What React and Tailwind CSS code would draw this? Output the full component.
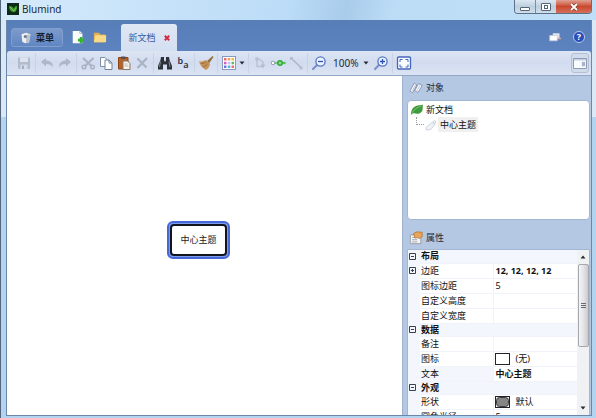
import { useState } from 'react';

const GROUPS = [
  {
    name: '布局',
    rows: [
      { label: '边距', value: '12, 12, 12, 12', bold: true, expandable: true },
      { label: '图标边距', value: '5' },
      { label: '自定义高度', value: '' },
      { label: '自定义宽度', value: '' },
    ],
  },
  {
    name: '数据',
    rows: [
      { label: '备注', value: '' },
      { label: '图标', value: '(无)', swatch: 'empty' },
      { label: '文本', value: '中心主题', bold: true, selected: true },
    ],
  },
  {
    name: '外观',
    rows: [
      { label: '形状', value: '默认', swatch: 'shape' },
      { label: '圆角半径', value: '5' },
    ],
  },
];

const Svg = ({ children, className = 'h-4 w-4' }) => (
  <svg viewBox="0 0 16 16" className={className} fill="none" aria-hidden="true">
    {children}
  </svg>
);

const SaveIcon = () => (
  <Svg>
    <path d="M2 2.500h12v11.500H3l-1-1z" fill="#b3bccb" />
    <path d="M4 2.500h8v4.500H4z" fill="#dde4f0" />
    <path d="M4.500 9.500h7V14h-7z" fill="#d3dbe8" />
    <path d="M6 10.500h2V14H6z" fill="#a3adbd" />
  </Svg>
);

const UndoIcon = () => (
  <Svg>
    <path d="M2 7l5-4v2.500c4 0 7 2 7 7-1.500-2.500-3.500-3.500-7-3.500v2.500z" fill="#adb7c8" />
  </Svg>
);

const RedoIcon = () => (
  <Svg>
    <path d="M14 7L9 3v2.500c-4 0-7 2-7 7C3.500 10 5.500 9 9 9v2.500z" fill="#adb7c8" />
  </Svg>
);

const CutIcon = () => (
  <Svg>
    <path d="M3 3l8.500 8M13.500 3L5 11" stroke="#a9b3c4" strokeWidth="2" />
    <circle cx="4" cy="12" r="1.800" stroke="#a9b3c4" strokeWidth="1.500" />
    <circle cx="12.500" cy="12" r="1.800" stroke="#a9b3c4" strokeWidth="1.500" />
  </Svg>
);

const CopyIcon = () => (
  <Svg>
    <path d="M2.500 2.500h4.500l2 2v7H2.500z" fill="#fff" stroke="#7d8fa9" />
    <path d="M7 5h4l3 3v6.500H7z" fill="#fff" stroke="#71849f" />
    <path d="M11 5v3h3" stroke="#71849f" />
  </Svg>
);

const PasteIcon = () => (
  <Svg>
    <path d="M2.500 2.500h9.500v11.500H2.500z" fill="#b5622a" stroke="#8b4318" />
    <path d="M5 1.500h4.500v2.500H5z" fill="#52514f" />
    <path d="M7 6h4.500l2.500 2.500v6H7z" fill="#f6f3ef" stroke="#8c7564" />
    <path d="M8.500 9h3M8.500 11h4" stroke="#b9b2ac" />
  </Svg>
);

const DeleteIcon = () => (
  <Svg>
    <path d="M3.500 3.500l9 9M13 3L3.500 13" stroke="#a9b3c4" strokeWidth="2.200" />
  </Svg>
);

const FindIcon = () => (
  <Svg>
    <path d="M4 2h3v3l.5 1.500h1L9 5V2h3l.5 3L15 11v3.500h-5V9.500H6v5H1V11l2.500-6z" fill="#2d3139" />
    <path d="M3.500 6.500L2.500 12M12 6.500l1 5.500" stroke="#858d99" />
  </Svg>
);

const BrushIcon = () => (
  <Svg>
    <path d="M14.500 1L9 6l2 2.500L15.500 2z" fill="#94723c" />
    <path d="M1 6.500c3 .5 5-1 7-1.500l4 4c-.5 3-2 5-4 6C5 13.500 2 10.500 1 6.500z" fill="#c4935a" />
    <path d="M3 8.500c3 0 4-1 5.500-1.500M5 11.500c2 0 3.500-1.500 4.500-2.500" stroke="#9c6c34" />
  </Svg>
);

const PaletteIcon = () => (
  <Svg>
    <rect x="1.500" y="1.500" width="13" height="13" fill="#fff" stroke="#8a98bd" />
    <path d="M3 3h2.500v2.500H3zM10.500 10.500H13V13h-2.500z" fill="#ee6b70" />
    <path d="M6.800 3h2.500v2.500H6.800z" fill="#ef9f5e" />
    <path d="M10.500 3H13v2.500h-2.500z" fill="#e4c145" />
    <path d="M3 6.800h2.500v2.500H3z" fill="#d45bc2" />
    <path d="M6.800 6.800h2.500v2.500H6.800z" fill="#bbc3ff" />
    <path d="M10.500 6.800H13v2.500h-2.500z" fill="#59bd65" />
    <path d="M3 10.500h2.500V13H3z" fill="#6674df" />
    <path d="M6.800 10.500h2.500V13H6.800z" fill="#55b2d9" />
  </Svg>
);

const TopicIcon = () => (
  <Svg>
    <path d="M5 4v7.500h5M7 4l4 3v3" stroke="#b9c3d3" strokeWidth="1.500" />
    <circle cx="5" cy="4" r="2" fill="#b9c3d3" />
    <path d="M8.500 9.500h5l-2.500 4z" fill="#b4becf" />
  </Svg>
);

const SiblingIcon = () => (
  <Svg>
    <path d="M4 8h11" stroke="#55bd55" strokeWidth="1.500" />
    <circle cx="3" cy="8" r="1.800" fill="#fff" stroke="#929daf" />
    <circle cx="10" cy="8" r="3" fill="#2eaa36" />
    <path d="M8.500 8h3M10 6.500v3" stroke="#a7efa3" />
    <circle cx="14.500" cy="8" r="1.200" fill="#4fbb50" />
  </Svg>
);

const LinkIcon = () => (
  <Svg>
    <path d="M4 4l9 8.500" stroke="#adb7c8" strokeWidth="1.500" />
    <path d="M2 2h3v3H2zM11.500 11.500h3v3h-3z" fill="#b6c0d1" />
  </Svg>
);

const ZoomIcon = ({ plus }) => (
  <Svg>
    <path d="M6.500 9.500L2 14" stroke="#7d91c7" strokeWidth="2.200" strokeLinecap="round" />
    <circle cx="9.500" cy="6.500" r="4.600" fill="#eaf2ff" stroke="#5574c4" strokeWidth="1.300" />
    <path d={plus ? 'M7 6.500h5M9.500 4v5' : 'M7 6.500h5'} stroke="#3153b4" strokeWidth="1.300" />
  </Svg>
);

const FitIcon = () => (
  <Svg>
    <rect x="1.500" y="2" width="13" height="12" rx="1" fill="#f8fbff" stroke="#4666bd" strokeWidth="1.300" />
    <path d="M4 7V4.500h2.500M9.500 4.500H12V7M12 9.500V12H9.500M6.500 12H4V9.500" stroke="#4666bd" />
  </Svg>
);

const SidebarIcon = () => (
  <Svg>
    <path d="M1.500 3.500h13v10h-13z" fill="#fafbfd" stroke="#8f9bb0" />
    <path d="M2 4h12v1.500H2z" fill="#c3cfe2" />
    <path d="M9.500 6.500h4V12h-4z" fill="#e3e9f3" />
    <path d="M10 8h3M10 10h3" stroke="#6d80a5" />
  </Svg>
);

const TagIcon = () => (
  <Svg className="h-3.5 w-3.5 shrink-0">
    <path d="M6 2.500l3 2-5 9-3-2zM11 3l4 2-4.500 8-4-2z" fill="#f7f9fd" stroke="#8292aa" />
    <path d="M7.500 4.500l-4 7M12.500 5l-4 7" stroke="#b9c3d2" />
  </Svg>
);

const NoteIcon = () => (
  <Svg className="h-3.5 w-3.5 shrink-0">
    <path d="M2 11l7-6 4 2-5 6-5 1z" fill="#eef1f5" stroke="#ccd2da" />
    <circle cx="12" cy="4.500" r="1.500" fill="#fff" stroke="#bfc7d1" />
  </Svg>
);

const LeafIcon = () => (
  <Svg className="h-3.5 w-3.5 shrink-0">
    <path d="M1 14C1 6 5 2 15 2c-1 2 0 4-1 7-2 3-5 3.500-8 3-2-.5-3.500 0-5 2z" fill="#3e9b3e" />
    <path d="M2 12c2-4 5-6 11-9" stroke="#8fcd7c" />
  </Svg>
);

const PropertyIcon = () => (
  <Svg className="h-3.5 w-3.5 shrink-0">
    <path d="M1.500 4.500h12v10h-12z" fill="#f5f4f1" stroke="#93979e" />
    <path d="M3.500 7.500h4M3.500 10h6M3.500 12.500h6" stroke="#919fb6" />
    <path d="M5 3l4-2 6 .5v5l-3 2-2-1-3 .5z" fill="#e8a458" stroke="#ba7831" />
  </Svg>
);

const Caret = ({ up }) => (
  <svg viewBox="0 0 6 4" className="h-1 w-1.5 shrink-0" aria-hidden="true">
    <path d={up ? 'M0.500 3.500h5L3 .5z' : 'M0.500 .5h5L3 3.500z'} fill="#252a33" />
  </svg>
);

const ToolButton = ({ label, disabled, children }) => (
  <button type="button" aria-label={label} disabled={disabled} className="flex h-5 w-[18px] shrink-0 items-center justify-center rounded-sm">
    {children}
  </button>
);

const Separator = () => <span className="mx-[2px] h-5 w-px shrink-0 bg-[#c8d3e6]" />;

const TitleBar = () => (
  <header className="flex h-5 shrink-0 items-start justify-between bg-linear-[100deg,#d6ebfb_0%,#c5e1f9_30%,#bcdcf7_48%,#a9cceb_58%,#bddcf6_66%,#bfdef8_100%] pl-1.5">
    <div className="flex items-center gap-[3px] pt-[3px]">
      <svg viewBox="0 0 12 12" className="h-3 w-3" aria-hidden="true">
        <rect width="12" height="12" fill="#102a18" />
        <path d="M2 3c3 0 4 1 5 3 0-2 1-3 3-3 0 4-1 6-3 6-3 0-5-2-5-6z" fill="#3c9b2f" />
        <path d="M3 4l4 4 2-3" stroke="#93d450" fill="none" strokeWidth=".7" />
      </svg>
      <h1 className="text-[10px] leading-3 text-[#1c2733]">Blumind</h1>
    </div>
    <div className="mr-1 flex h-3.5 overflow-hidden rounded-b-sm border border-t-0 border-[#5e7087]">
      <button type="button" aria-label="最小化" className="flex w-[21px] items-center justify-center border-r border-[#7b8da3] bg-linear-to-b from-[#dce8f3] via-[#bdcfdf] to-[#cfdeea]">
        <span className="mt-1 h-1 w-2.5 rounded-[1px] border border-[#566577] bg-white" />
      </button>
      <button type="button" aria-label="最大化" className="flex w-5 items-center justify-center bg-linear-to-b from-[#dce8f3] via-[#bdcfdf] to-[#cfdeea]">
        <span className="flex h-2 w-2.5 items-center justify-center rounded-[1px] border border-[#566577] bg-white">
          <span className="h-1 w-1 border border-[#566577]" />
        </span>
      </button>
      <button type="button" aria-label="关闭" className="flex w-[35px] items-center justify-center bg-linear-to-b from-[#e0a192] via-[#c9472e] to-[#d3705a]">
        <svg viewBox="0 0 10 8" className="h-2 w-2.5" aria-hidden="true">
          <path d="M2 1l6 6M8 1L2 7" stroke="#6f3830" strokeWidth="3" />
          <path d="M2 1l6 6M8 1L2 7" stroke="#fff" strokeWidth="1.800" />
        </svg>
      </button>
    </div>
  </header>
);

const TabBar = () => (
  <nav className="flex h-[31px] shrink-0 items-end bg-linear-to-b from-[#587eb8] to-[#5c83bf] pl-1">
    <button type="button" className="mb-1 flex h-[19px] w-[52px] items-center justify-center gap-1 rounded-[3px] border border-[#809fd0] bg-linear-to-b from-[#7d9acb] to-[#6186c2] text-[9px] font-bold text-[#141d2d]">
      <Svg className="h-3 w-3">
        <path d="M2 3l6-2 6 2-2 11-5 1-4-2z" fill="#eef0f2" />
        <path d="M8 4l6-1-2 11-4 1z" fill="#bcc3cc" />
        <circle cx="7" cy="6" r="2" fill="#69788b" />
      </Svg>
      菜单
    </button>
    <button type="button" aria-label="新建" className="mb-1.5 ml-2 flex h-4 w-[14px] items-center justify-center">
      <Svg className="h-3.5 w-3.5">
        <path d="M2 1h8l3 3v11H2z" fill="#fafcfc" />
        <path d="M10 1v3h3" stroke="#aebecf" />
        <path d="M11.500 8v7M8 11.500h7" stroke="#35b52d" strokeWidth="3" />
      </Svg>
    </button>
    <button type="button" aria-label="打开" className="mb-1.5 ml-2 flex h-4 w-[14px] items-center justify-center">
      <Svg className="h-3.5 w-3.5">
        <path d="M1 3h6l1.500 2H14v9H1z" fill="#e2ae50" />
        <path d="M2.500 6H15v7.500l-1 .5H1z" fill="#f8da86" />
      </Svg>
    </button>
    <div className="ml-3.5 flex h-[27px] w-14 items-center justify-center gap-2 rounded-t-[3px] bg-linear-to-b from-[#e0e7f5] to-[#d3dff1]">
      <span className="text-[9px] text-[#345ba5]">新文档</span>
      <button type="button" aria-label="关闭标签">
        <svg viewBox="0 0 8 8" className="h-1.5 w-1.5" aria-hidden="true">
          <path d="M1 1l6 6M7 1L1 7" stroke="#cf2b40" strokeWidth="2.500" />
        </svg>
      </button>
    </div>
    <div className="mr-1.5 mb-2 ml-auto flex items-center gap-3">
      <button type="button" aria-label="窗口">
        <Svg className="h-3 w-3">
          <path d="M5 3h9v7H5z" fill="#dfe5ee" />
          <path d="M1 6h10v7H1z" fill="#fff" stroke="#c5cbd7" />
          <path d="M12 10h4" stroke="#d9a6a2" strokeWidth="2" />
        </Svg>
      </button>
      <button type="button" aria-label="帮助" className="flex h-3 w-3 items-center justify-center rounded-full border border-[#b9ccf1] bg-[#284db5] text-[9px] leading-3 font-bold text-white">
        ?
      </button>
    </div>
  </nav>
);

const Toolbar = () => (
  <div className="flex h-[25px] shrink-0 items-center rounded-t-[3px] border-b border-[#96a8c7] bg-linear-to-b from-[#dde5f4] via-[#d2dcef] to-[#dbe4f3] pr-0.5 pl-2">
    <ToolButton label="保存" disabled><SaveIcon /></ToolButton>
    <Separator />
    <ToolButton label="撤销" disabled><UndoIcon /></ToolButton>
    <ToolButton label="重做" disabled><RedoIcon /></ToolButton>
    <Separator />
    <ToolButton label="剪切" disabled><CutIcon /></ToolButton>
    <ToolButton label="复制"><CopyIcon /></ToolButton>
    <ToolButton label="粘贴"><PasteIcon /></ToolButton>
    <ToolButton label="删除" disabled><DeleteIcon /></ToolButton>
    <Separator />
    <ToolButton label="查找"><FindIcon /></ToolButton>
    <ToolButton label="替换">
      <span className="flex text-[9px] leading-3 font-semibold text-[#28344b]">
        <span className="pb-1">b</span>
        <span className="pt-1">a</span>
      </span>
    </ToolButton>
    <Separator />
    <ToolButton label="格式刷"><BrushIcon /></ToolButton>
    <Separator />
    <button type="button" aria-label="主题颜色" className="flex h-5 w-[26px] shrink-0 items-center gap-0.5 pl-px">
      <PaletteIcon />
      <Caret />
    </button>
    <Separator />
    <ToolButton label="添加子主题" disabled><TopicIcon /></ToolButton>
    <ToolButton label="添加主题"><SiblingIcon /></ToolButton>
    <ToolButton label="添加连线" disabled><LinkIcon /></ToolButton>
    <Separator />
    <ToolButton label="缩小"><ZoomIcon /></ToolButton>
    <button type="button" className="flex h-5 w-11 shrink-0 items-center justify-between pr-[3px] pl-[5px] text-[10px] text-[#222b3a]">
      100%
      <Caret />
    </button>
    <ToolButton label="放大"><ZoomIcon plus /></ToolButton>
    <Separator />
    <ToolButton label="适合窗口"><FitIcon /></ToolButton>
    <button type="button" aria-label="侧边栏" className="ml-auto flex h-5 w-[18px] items-center justify-center rounded-[3px] border border-[#b3c0d6] bg-[#d0dbec]">
      <SidebarIcon />
    </button>
  </div>
);

const PanelTitle = ({ icon, children }) => (
  <h2 className="flex items-center gap-[3px] pl-0.5 text-[9px] text-[#1f2a3c]">
    {icon}
    {children}
  </h2>
);

const Expander = ({ open, label, onClick }) => (
  <button type="button" aria-label={label} aria-expanded={open} onClick={onClick} className="flex h-[7px] w-[7px] items-center justify-center">
    <svg viewBox="0 0 7 7" className="h-[7px] w-[7px]" aria-hidden="true">
      <path d={open ? 'M.5 .5h6v6h-6zM2 3.500h3' : 'M.5 .5h6v6h-6zM2 3.500h3M3.500 2v3'} fill="none" stroke="#394150" />
    </svg>
  </button>
);

const Swatch = ({ kind }) => (
  <svg viewBox="0 0 15 12" className="mr-1.5 h-3 w-[15px] shrink-0" aria-hidden="true">
    <rect x=".5" y=".5" width="14" height="11" fill="#fff" stroke="#20242a" />
    {kind === 'shape' && <rect x="1.500" y="1.500" width="12" height="9" rx="3" fill="#858585" stroke="#3b3b3b" />}
  </svg>
);

const ObjectTree = () => (
  <div className="h-[120px] shrink-0 rounded-sm border border-[#a3b6d3] bg-white pt-px pl-0.5 text-[9px] leading-[15px] text-[#111]">
    <ul>
      <li>
        <div className="flex h-[15px] items-center gap-0.5">
          <LeafIcon />
          新文档
        </div>
        <ul className="ml-1.5">
          <li className="flex h-[15px] items-center">
            <span className="mb-[7px] h-2 w-2 border-b border-l border-dotted border-[#9a9a9a]" />
            <NoteIcon />
            <span className="bg-[#f0f0f0] px-0.5">中心主题</span>
          </li>
        </ul>
      </li>
    </ul>
  </div>
);

const PropertyGrid = () => {
  const [closed, setClosed] = useState([]);

  const toggle = (name) => {
    setClosed(closed.includes(name) ? closed.filter((n) => n !== name) : [...closed, name]);
  };

  return (
    <div className="flex min-h-0 flex-1 border border-b-0 border-[#a3b6d3] bg-white">
      <div className="min-w-0 flex-1 overflow-hidden">
        <table className="w-full table-fixed border-collapse text-[9px] leading-3 text-[#111]">
          <colgroup>
            <col className="w-3" />
            <col className="w-[73px]" />
            <col />
          </colgroup>
          {GROUPS.map((group) => (
            <tbody key={group.name}>
              <tr className="h-[13px] bg-[#f3f6fc]">
                <td className="pl-px">
                  <Expander open={!closed.includes(group.name)} label={group.name} onClick={() => toggle(group.name)} />
                </td>
                <th colSpan={2} className="pl-px text-left font-bold">{group.name}</th>
              </tr>
              {!closed.includes(group.name) && group.rows.map((row) => (
                <tr key={row.label} className="h-[15px]">
                  <td className="bg-[#f3f6fc] pl-px">
                    {row.expandable && <Expander open={false} label={row.label} />}
                  </td>
                  <th className={`border border-l-0 border-[#f0f3f9] pl-px text-left font-normal ${row.selected ? 'bg-[#f3f6fc]' : ''}`}>
                    {row.label}
                  </th>
                  <td className="border border-r-0 border-[#f0f3f9]">
                    <div className={`flex h-3 items-center ${row.swatch ? 'pl-px' : 'pl-0.5'} ${row.bold ? 'font-bold' : ''}`}>
                      {row.swatch && <Swatch kind={row.swatch} />}
                      {row.value}
                    </div>
                  </td>
                </tr>
              ))}
            </tbody>
          ))}
        </table>
      </div>
      <div className="flex w-3 shrink-0 flex-col items-center bg-[#f0f1f3]" aria-hidden="true">
        <span className="flex h-3.5 items-center"><Caret up /></span>
        <span className="flex h-[83px] w-[11px] flex-col items-center justify-center gap-px rounded-[2px] border border-[#a5a9ae] bg-linear-to-r from-[#f5f5f5] via-[#e3e4e6] to-[#c9cbce]">
          <span className="h-px w-[5px] bg-[#666b73]" />
          <span className="h-px w-[5px] bg-[#666b73]" />
          <span className="h-px w-[5px] bg-[#666b73]" />
        </span>
        <span className="mt-auto flex h-3.5 items-center"><Caret /></span>
      </div>
    </div>
  );
};

const App = () => (
  <div className="flex h-screen flex-col overflow-hidden border-l border-[#52667c] bg-linear-to-b from-[#dbe9f7] from-28% to-[#b3d4f1] to-28% font-['Noto_Sans','Noto_Sans_CJK_SC',sans-serif]">
    <TitleBar />
    <div className="mr-1 mb-0.5 ml-[5px] flex min-h-0 flex-1 flex-col border-x border-b border-[#6d87ab] bg-[#5c83bf]">
      <TabBar />
      <Toolbar />
      <main className="flex min-h-0 flex-1 bg-[#b4c7e3]">
        <section className="flex flex-1 items-center justify-center border-r border-[#a0b2cf] bg-white pr-3">
          <div className="mb-3 rounded-md border-2 border-[#4568d6] bg-[#7c9bf0] p-px">
            <div className="rounded-sm border-2 border-[#11131d] bg-white px-2 py-2 text-[9px] leading-3 text-[#222]">
              中心主题
            </div>
          </div>
        </section>
        <aside className="flex w-[188px] shrink-0 flex-col pr-px pl-1">
          <div className="flex h-6 shrink-0 items-center">
            <PanelTitle icon={<TagIcon />}>对象</PanelTitle>
          </div>
          <ObjectTree />
          <div className="flex h-[29px] shrink-0 items-center pt-1.5">
            <PanelTitle icon={<PropertyIcon />}>属性</PanelTitle>
          </div>
          <PropertyGrid />
        </aside>
      </main>
    </div>
  </div>
);

export default App;
